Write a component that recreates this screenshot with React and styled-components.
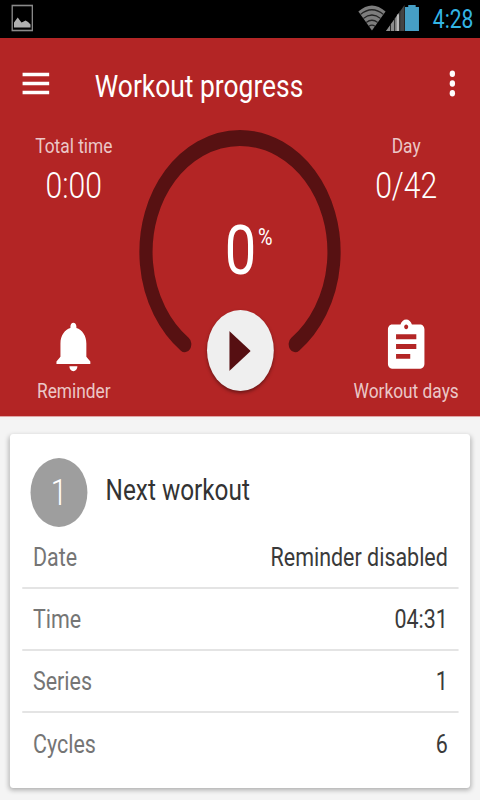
import React from 'react';
import styled, { createGlobalStyle } from 'styled-components';

const GlobalStyle = createGlobalStyle`
  html, body {
    margin: 0;
    width: 480px;
    height: 800px;
    overflow: hidden;
    background: #f4f4f4;
  }

  * {
    box-sizing: border-box;
  }

  svg {
    display: block;
    flex: none;
  }
`;

// laid out 582px wide and squeezed to the 480px viewport
const Screen = styled.div`
  display: flex;
  flex-direction: column;
  width: 582px;
  height: 800px;
  transform: scaleX(0.82474);
  transform-origin: 0 0;
  font-family: Roboto, 'Noto Sans', sans-serif;
  background: #f4f4f4;
`;

const StatusBar = styled.div`
  display: flex;
  justify-content: space-between;
  height: 38px;
  padding: 0 8px 0 13px;
  background: #000;
`;

const StatusIcons = styled.div`
  display: flex;
`;

const Clock = styled.span`
  margin-left: 17px;
  font-size: 25.5px;
  line-height: 38px;
  color: #33b5e5;
`;

const Hero = styled.div`
  display: flex;
  flex-direction: column;
  height: 379px;
  background: #b32525;
  border-bottom: 1px solid #e0a5a5;
  color: #fff;
`;

const Toolbar = styled.div`
  display: flex;
  align-items: center;
  height: 91px;
  padding: 0 14px 0 22px;
`;

const Title = styled.h1`
  flex: 1;
  margin: 5px 0 0 50px;
  font-size: 32px;
  font-weight: 400;
  line-height: 40px;
`;

const Progress = styled.div`
  display: grid;
  grid-template-columns: 179px 224px 179px;
  flex: 1;
`;

const Side = styled.div`
  display: flex;
  flex-direction: column;
  justify-content: space-between;
  align-items: center;
  padding: 2px 0 10px;
`;

const Stat = styled.div`
  display: flex;
  flex-direction: column;
  align-items: center;
`;

const Caption = styled.span`
  font-size: 21px;
  line-height: 30px;
  white-space: nowrap;
  color: rgba(255, 255, 255, 0.75);
`;

const StatValue = styled.span`
  margin-top: 3px;
  font-size: 36.5px;
  font-weight: 300;
  line-height: 44px;
`;

const Shortcut = styled.div`
  display: flex;
  flex-direction: column;
  align-items: center;
`;

const Dial = styled.div`
  position: relative;
  display: flex;
  justify-content: center;
`;

const DialOverlay = styled.div`
  position: absolute;
  inset: 0;
  display: flex;
  flex-direction: column;
  align-items: center;
  justify-content: space-between;
  padding: 84px 0 25px;
`;

const Percent = styled.div`
  display: flex;
  align-items: flex-start;
  margin-left: 21px;
  font-size: 68px;
  line-height: 76px;
`;

const PercentSign = styled.span`
  margin-left: 2px;
  font-size: 24px;
  line-height: 48px;
`;

const PlayButton = styled.div`
  display: flex;
  align-items: center;
  justify-content: center;
  width: 81px;
  height: 81px;
  border-radius: 50%;
  background: #efefef;
  box-shadow: 0 2px 4px rgba(0, 0, 0, 0.4);
`;

const Card = styled.div`
  display: flex;
  flex-direction: column;
  width: 558px;
  height: 354px;
  margin: 17px 12px 0;
  padding: 24px 14px 0 15px;
  border-radius: 4px;
  background: #fff;
  box-shadow: 0 2px 6px rgba(0, 0, 0, 0.3);
`;

const CardHeader = styled.div`
  display: flex;
  align-items: center;
  height: 69px;
  padding-left: 10px;
`;

const Badge = styled.div`
  width: 69px;
  height: 69px;
  border-radius: 50%;
  background: #9e9e9e;
  color: #fff;
  font-size: 36px;
  font-weight: 300;
  line-height: 71px;
  text-align: center;
`;

const CardTitle = styled.h2`
  margin: -6px 0 0 22px;
  font-size: 29.5px;
  font-weight: 400;
  line-height: 36px;
  color: #333;
`;

const Row = styled.div`
  display: flex;
  justify-content: space-between;
  align-items: center;
  height: ${(p) => (p.$first ? 62 : 62)}px;
  padding: 0 13px;
  border-bottom: ${(p) => (p.$last ? 'none' : '2px solid #e4e4e4')};
  font-size: 26px;
  line-height: 32px;
`;

const RowLabel = styled.span`
  color: #757575;
`;

const RowValue = styled.span`
  color: #3a3a3a;
`;

const MenuIcon = () => (
  <svg width="43" height="43" viewBox="0 0 24 24" fill="#fff">
    <path d="M3 18h18v-2H3v2zm0-5h18v-2H3v2zm0-7v2h18V6H3z" />
  </svg>
);

const MoreIcon = () => (
  <svg width="39" height="39" viewBox="0 0 24 24" fill="#fff">
    <circle cx="12" cy="6" r="2" />
    <circle cx="12" cy="12" r="2" />
    <circle cx="12" cy="18" r="2" />
  </svg>
);

const BellIcon = () => (
  <svg width="58" height="58" viewBox="-.5 0 24 24" fill="#fff">
    <path d="M11.5 22c1.1 0 2-.9 2-2h-4c0 1.1.9 2 2 2zm6.5-6v-5.5c0-3.07-2.13-5.64-5-6.32V3.5c0-.83-.67-1.5-1.5-1.5S10 2.67 10 3.5v.68c-2.87.68-5 3.25-5 6.32V16l-2 2v1h17v-1l-2-2z" />
  </svg>
);

const ClipboardIcon = () => (
  <svg width="59" height="59" viewBox="0 0 24 24" fill="#fff">
    <path d="M19 3h-4.18C14.4 1.84 13.3 1 12 1c-1.3 0-2.4.84-2.82 2H5c-1.1 0-2 .9-2 2v14c0 1.1.9 2 2 2h14c1.1 0 2-.9 2-2V5c0-1.1-.9-2-2-2zm-7 0c.55 0 1 .45 1 1s-.45 1-1 1-1-.45-1-1 .45-1 1-1zm2 14H7v-2h7v2zm3-4H7v-2h10v2zm0-4H7V7h10v2z" />
  </svg>
);

const PictureIcon = () => (
  <svg width="28" height="38" viewBox="0 0 28 38">
    <rect x="1.8" y="5.5" width="24.4" height="25" fill="none" stroke="#8a8a8a" strokeWidth="1.6" />
    <path d="M4 27.5v-5l4.5-5 4.5 5 1.500-.5 3.500-1.500 3 1.500 3 2.500v3z" fill="#b0b0b0" />
  </svg>
);

const WifiIcon = () => (
  <svg width="34" height="38" viewBox="0 0 34 38">
    <path d="M17 30.500L.5 11.500Q17-.5 33.500 11.500z" fill="#7d7d7d" />
    <path d="M3 14.500q14-9.500 28 0M6.500 18.500q10.500-7 21 0M10 22.500q7-4.500 14 0M13.200 26.300q3.800-2.300 7.600 0" fill="none" stroke="#222" strokeWidth="1.3" />
  </svg>
);

const SignalIcon = () => (
  <svg width="23" height="38" viewBox="0 0 23 38">
    <path d="M0 31L22.500 5v26z" fill="#444" />
    <path d="M0 31L16.500 12v19z" fill="#8c8c8c" />
    <path d="M5.500 24v7M10.500 18v13M16.700 11v20" stroke="#222" strokeWidth="1" />
    <path d="M14.500 14.500v16.500" stroke="#bbb" strokeWidth="2.500" />
  </svg>
);

const BatteryIcon = () => (
  <svg width="17" height="38" viewBox="0 0 17 38">
    <path d="M0 7h4V5h9v2h4v24H0z" fill="#469fc6" />
  </svg>
);

const Ring = () => (
  <svg width="246" height="246" viewBox="-123 -123 246 246">
    <path d="M-67 92.200A114 114 0 1 1 67 92.200" fill="none" stroke="#571112" strokeWidth="16" strokeLinecap="round" />
  </svg>
);

const rows = [
  { label: 'Date', value: 'Reminder disabled' },
  { label: 'Time', value: '04:31' },
  { label: 'Series', value: '1' },
  { label: 'Cycles', value: '6' },
];

function App() {
  return (
    <>
      <GlobalStyle />
      <Screen>
        <StatusBar>
          <PictureIcon />
          <StatusIcons>
            <WifiIcon />
            <SignalIcon />
            <BatteryIcon />
            <Clock>4:28</Clock>
          </StatusIcons>
        </StatusBar>

        <Hero>
          <Toolbar>
            <MenuIcon />
            <Title>Workout progress</Title>
            <MoreIcon />
          </Toolbar>
          <Progress>
            <Side>
              <Stat>
                <Caption>Total time</Caption>
                <StatValue>0:00</StatValue>
              </Stat>
              <Shortcut>
                <BellIcon />
                <Caption>Reminder</Caption>
              </Shortcut>
            </Side>
            <Dial>
              <Ring />
              <DialOverlay>
                <Percent>
                  0<PercentSign>%</PercentSign>
                </Percent>
                <PlayButton>
                  <svg width="26" height="40" viewBox="0 0 26 40">
                    <path d="M0 0l26 20L0 40z" fill="#560f12" />
                  </svg>
                </PlayButton>
              </DialOverlay>
            </Dial>
            <Side>
              <Stat>
                <Caption>Day</Caption>
                <StatValue>0/42</StatValue>
              </Stat>
              <Shortcut>
                <ClipboardIcon />
                <Caption>Workout days</Caption>
              </Shortcut>
            </Side>
          </Progress>
        </Hero>

        <Card>
          <CardHeader>
            <Badge>1</Badge>
            <CardTitle>Next workout</CardTitle>
          </CardHeader>
          {rows.map((row, i) => (
            <Row key={row.label} $last={i === rows.length - 1}>
              <RowLabel>{row.label}</RowLabel>
              <RowValue>{row.value}</RowValue>
            </Row>
          ))}
        </Card>
      </Screen>
    </>
  );
}

export default App;
